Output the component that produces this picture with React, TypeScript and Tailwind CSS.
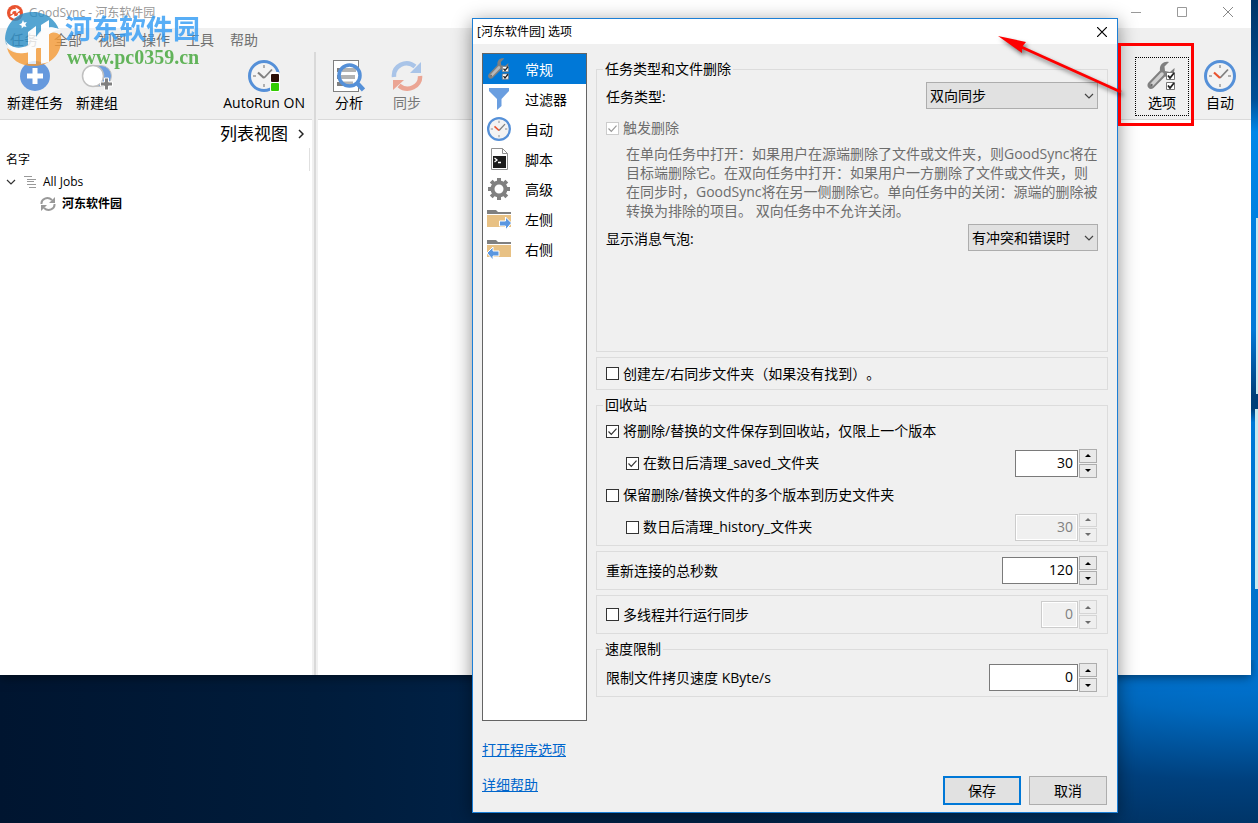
import React, { useState } from "react";

type IconProps = { className?: string };

/* ---------- Icons ---------- */

const AppLogo = () => (
  <svg width="16" height="16" viewBox="0 0 16 16" className="shrink-0">
    <circle cx="8" cy="8" r="8" fill="#e9532f" />
    <path d="M4.500 9C3.500 6 6 4.200 9 5.200" fill="none" stroke="#fff" strokeWidth="2" />
    <path d="M8.500 2.200l4.500 3-3.500 3.300z" fill="#fff" />
    <path d="M11.800 8c.8 2.800-1.600 4.600-4.600 3.800" fill="none" stroke="#fff" strokeWidth="2" />
    <path d="M7.800 14.200L3 11.500l4-2.800z" fill="#fff" />
  </svg>
);

const PlusCircle = () => (
  <svg width="32" height="32" viewBox="0 0 32 32">
    <circle cx="16" cy="16" r="15" fill="#6699dd" />
    <path d="M13.500 8h5v5.500H24v5h-5.500V24h-5v-5.500H8v-5h5.500z" fill="#fff" />
  </svg>
);

const GroupIcon = () => (
  <svg width="32" height="32" viewBox="0 0 32 32">
    <path d="M12 5.500h8a10.500 10.500 0 0 1 0 21h-8z" fill="#6f9fe0" stroke="#c4c4c4" strokeWidth="1" />
    <circle cx="12" cy="16" r="10.500" fill="#fff" stroke="#c0c0c0" strokeWidth="1.500" />
    <path d="M23.500 18h4v4h4v4h-4v4h-4v-4h-4v-4h4z" fill="#808080" stroke="#fff" strokeWidth="1" />
  </svg>
);

const Clock = ({ className, accent = "#e9532f" }: IconProps & { accent?: string }) => (
  <svg viewBox="0 0 32 32" className={className}>
    <circle cx="16" cy="16" r="14.500" fill="#f3f3f3" stroke="#5590d8" strokeWidth="3" />
    <path d="M16 5v3M16 24v3M5 16h3M24 16h3" stroke="#b0b0b0" strokeWidth="2" />
    <path d="M16 18l8-8.500" stroke="#808080" strokeWidth="1.800" />
    <path d="M10 12.500l6 5.500" stroke={accent} strokeWidth="2.200" />
  </svg>
);

const AutoRunIcon = () => (
  <div className="relative h-8 w-8">
    <Clock className="h-8 w-8" accent="#808080" />
    <svg width="10" height="20" viewBox="0 0 10 20" className="absolute bottom-0 right-0">
      <rect width="10" height="20" rx="2" fill="#fff" />
      <rect x="1" y="2" width="8" height="8" rx="1" fill="#2c1008" />
      <rect x="1" y="11" width="8" height="8" rx="1" fill="#3c0" />
    </svg>
  </div>
);

const AnalyzeIcon = () => (
  <svg width="32" height="32" viewBox="0 0 32 32">
    <rect x="0.500" y="0.500" width="25" height="31" fill="#fff" stroke="#808080" />
    <path d="M4 10h6M4 17h4M4 24h8" stroke="#808080" strokeWidth="4" />
    <circle cx="16.500" cy="15.500" r="10" fill="#fff" />
    <path d="M9 10h14M7 17h15M10 23.500h10" stroke="#b3b3b3" strokeWidth="4" />
    <circle cx="16.500" cy="15.500" r="10.500" fill="none" stroke="#5590d8" strokeWidth="3.500" />
    <path d="M23.500 22.500l7 7.500" stroke="#5590d8" strokeWidth="4.500" />
  </svg>
);

const SyncIcon = () => (
  <svg width="32" height="32" viewBox="0 0 32 32">
    <path d="M3 17C2 6 15-1 24 6.500" fill="none" stroke="#a9c4e8" strokeWidth="4.500" />
    <path d="M30 2v11H19z" fill="#a9c4e8" />
    <path d="M29 16c1 10-12 17-21 9.500" fill="none" stroke="#eba594" strokeWidth="4.500" />
    <path d="M2 30V20h11z" fill="#eba594" />
  </svg>
);

const WrenchIcon = ({ className, light }: IconProps & { light?: boolean }) => (
  <svg viewBox="0 0 32 32" className={className}>
    <path
      d="M23 2c-5-1.500-10 2.500-9 8.500L2.500 22.500C-.5 26 3.500 31 7.500 28L19 16.500c5 1 10-2.500 9.500-8.500l-4.500 4-5-1-.5-4.500z"
      fill="#808080"
    />
    <path d="M6 24.500L16 14" stroke={light ? "#b8b8b8" : "#d0d0d0"} strokeWidth="3.500" strokeLinecap="round" />
    <circle cx="5.500" cy="25" r="1.200" fill="#666" />
    <path d="M20.500 12.500h8v7h-8zM20.500 22.500h8v7h-8z" fill="#fff" stroke="#777" />
    <path d="M22 15.500l2 2.500 4-5M22 25.500l2 2.500 4-5" fill="none" stroke="#222" strokeWidth="1.800" />
  </svg>
);

const FilterIcon = () => (
  <svg width="24" height="24" viewBox="0 0 24 24">
    <path d="M2 1h20v3l-7.500 8v7L10 23V12L2 4z" fill="#6a9ee0" />
  </svg>
);

const ScriptIcon = () => (
  <svg width="24" height="24" viewBox="0 0 24 24">
    <path d="M4.500 1.500h11l5 5v16h-16z" fill="#fff" stroke="#909090" />
    <path d="M15.500 1.500v5h5" fill="none" stroke="#909090" />
    <rect x="6" y="9" width="13" height="12" fill="#1c1c1c" />
    <path d="M7.500 11l2.500 2-2.500 2M11 15.500h3" fill="none" stroke="#fff" strokeWidth="1.300" />
  </svg>
);

const GearIcon = () => (
  <svg width="24" height="24" viewBox="0 0 24 24">
    <g stroke="#808080" strokeWidth="4">
      <path d="M12 1v5M12 18v5M1 12h5M18 12h5M4.200 4.200l3.500 3.500M16.300 16.300l3.500 3.500M4.200 19.800l3.500-3.500M16.300 7.700l3.500-3.500" />
      <circle cx="12" cy="12" r="6.500" fill="#fff" />
    </g>
  </svg>
);

const FolderIcon = ({ left }: { left?: boolean }) => (
  <svg width="24" height="24" viewBox="0 0 24 24">
    <path d="M0 3h9l2 2h13v2H0z" fill="#808080" />
    <path d="M0 8h24v12H0z" fill="#e8c184" />
    {left ? (
      <path d="M0 16l6-6v4h6v5H6v4z" fill="#5b97e0" stroke="#fff" />
    ) : (
      <path d="M24.500 16l-6-6v4h-6v5h6v4z" fill="#5b97e0" stroke="#fff" />
    )}
  </svg>
);

const ChevronDown = ({ className }: IconProps) => (
  <svg width="10" height="6" viewBox="0 0 10 6" className={className}>
    <path d="M1 1l4 4 4-4" fill="none" stroke="currentColor" strokeWidth="1.200" />
  </svg>
);

/* ---------- Form parts ---------- */

const Check = ({
  label,
  checked,
  disabled,
}: {
  label: string;
  checked?: boolean;
  disabled?: boolean;
}) => (
  <label className={`relative flex items-center gap-1 ${disabled ? "text-[#6d6d6d]" : "text-black"}`}>
    <input
      type="checkbox"
      defaultChecked={checked}
      disabled={disabled}
      className="peer h-[13px] w-[13px] appearance-none border border-[#333] bg-white disabled:border-[#ccc]"
    />
    <svg
      viewBox="0 0 13 13"
      className="pointer-events-none invisible absolute left-0 h-[13px] w-[13px] peer-checked:visible peer-disabled:opacity-50"
    >
      <path d="M2.500 6.500l2.800 2.800 5.200-5.600" fill="none" stroke="#333" strokeWidth="1.200" />
    </svg>
    <span>{label}</span>
  </label>
);

const Dropdown = ({ id, value, className }: { id: string; value: string; className: string }) => (
  <div className={`relative text-black ${className}`}>
    <select
      id={id}
      defaultValue={value}
      className="h-[27px] w-full appearance-none border border-[#adadad] bg-[#e1e1e1] pl-[3px] leading-5"
    >
      <option>{value}</option>
    </select>
    <ChevronDown className="pointer-events-none absolute right-1 top-[11px] text-[#444]" />
  </div>
);

const Spinner = ({
  label,
  initial,
  disabled,
  className,
}: {
  label: string;
  initial: number;
  disabled?: boolean;
  className: string;
}) => {
  const [value, setValue] = useState(initial);
  const button =
    "flex h-[14px] w-[18px] items-center justify-center border border-[#adadad] bg-[#e9e9e9] text-black disabled:border-[#d5d5d5] disabled:bg-[#efefef] disabled:text-[#6d6d6d]";

  return (
    <div className="flex items-center gap-px">
      <input
        type="text"
        inputMode="numeric"
        aria-label={label}
        disabled={disabled}
        value={value}
        onChange={(e) => setValue(Number(e.target.value) || 0)}
        className={`h-[27px] border border-[#7a7a7a] bg-white pb-0.5 pr-1 text-right text-black disabled:border-[#ccc] disabled:bg-[#f0f0f0] disabled:text-[#808080] disabled:shadow-[inset_0_0_0_1px_#fff] ${className}`}
      />
      <div className="flex flex-col gap-px">
        <button type="button" aria-label="增加" disabled={disabled} onClick={() => setValue(value + 1)} className={button}>
          <svg width="6" height="3" viewBox="0 0 6 3">
            <path d="M0 3l3-3 3 3z" fill="currentColor" />
          </svg>
        </button>
        <button type="button" aria-label="减少" disabled={disabled} onClick={() => setValue(Math.max(0, value - 1))} className={button}>
          <svg width="6" height="3" viewBox="0 0 6 3">
            <path d="M0 0l3 3 3-3z" fill="currentColor" />
          </svg>
        </button>
      </div>
    </div>
  );
};

const Group = ({ title, children }: { title?: string; children: React.ReactNode }) => (
  <fieldset className="min-w-0 border border-[#dcdcdc] px-1.5">
    {title && <legend className="px-0.5 leading-5">{title}</legend>}
    <div className="pl-[3px] pr-1">{children}</div>
  </fieldset>
);

const ToolButton = ({
  label,
  icon,
  className = "",
}: {
  label: string;
  icon: React.ReactNode;
  className?: string;
}) => (
  <button type="button" className={`flex shrink-0 flex-col items-center gap-px whitespace-nowrap leading-5 ${className}`}>
    {icon}
    <span>{label}</span>
  </button>
);

/* ---------- Main window ---------- */

const menus = ["任务", "全部", "视图", "操作", "工具", "帮助"];

const MainWindow = () => (
  <div className="mr-[7px] flex flex-1 flex-col bg-white shadow-[0_2px_10px_rgba(0,0,0,0.5)]">
    {/* Title bar */}
    <div className="flex h-7 items-start justify-between text-[#999]">
      <div className="flex h-[26px] items-center gap-1.5 pl-[7px] text-xs">
        <AppLogo />
        <span>GoodSync - 河东软件园</span>
      </div>
      <div className="flex h-6 items-center">
        <button type="button" aria-label="最小化" className="flex w-[46px] justify-center">
          <svg width="10" height="10" viewBox="0 0 10 10"><path d="M0 5.500h10" stroke="#999" /></svg>
        </button>
        <button type="button" aria-label="最大化" className="flex w-[46px] justify-center">
          <svg width="10" height="10" viewBox="0 0 10 10"><path d="M.5.5h9v9h-9z" fill="none" stroke="#999" /></svg>
        </button>
        <button type="button" aria-label="关闭" className="flex w-[46px] justify-center">
          <svg width="10" height="10" viewBox="0 0 10 10"><path d="M0 0l10 10M10 0L0 10" stroke="#888" /></svg>
        </button>
      </div>
    </div>

    {/* Menu */}
    <nav className="flex h-6 items-center gap-4 bg-[#f0f0f0] pl-2.5 text-[#707070]">
      {menus.map((item) => (
        <button type="button" key={item}>{item}</button>
      ))}
    </nav>

    <div className="flex flex-1">
      {/* Jobs */}
      <div className="flex w-[312px] shrink-0 flex-col">
        <div className="flex h-[68px] items-start gap-[13px] border-b border-[#dadada] bg-[#f0f0f0] px-[7px] pt-2">
          <ToolButton label="新建任务" icon={<PlusCircle />} />
          <ToolButton label="新建组" icon={<GroupIcon />} />
          <ToolButton label="AutoRun ON" icon={<AutoRunIcon />} className="ml-auto" />
        </div>
        <button type="button" className="flex h-7 items-center justify-end gap-2.5 pr-2 text-[17px]">
          列表视图
          <svg width="6" height="10" viewBox="0 0 6 10">
            <path d="M1 1l4 4-4 4" fill="none" stroke="#222" strokeWidth="1.500" />
          </svg>
        </button>
        <div className="mr-0.5 flex h-[23px] items-center border-r border-[#e0e0e0] pl-1.5 text-xs">名字</div>
        <div className="flex h-[22px] items-center pl-1.5 text-xs">
          <ChevronDown className="text-[#333]" />
          <svg width="12" height="12" viewBox="0 0 12 12" className="ml-2 mr-[7px]">
            <path d="M0 .5h8M3 3.500h9M3 5.500h7M3 8.500h9M5 11.500h7" stroke="#999" />
          </svg>
          All Jobs
        </div>
        <div className="flex h-[22px] items-center gap-1.5 pl-10 text-xs font-bold">
          <svg width="16" height="16" viewBox="0 0 16 16">
            <path d="M1.500 8C1 3 7.500 0 12 4M14.500 8C15 13 8.500 16 4 12" fill="none" stroke="#999" strokeWidth="2" />
            <path d="M15 1v6H9zM1 15V9h6z" fill="#999" />
          </svg>
          河东软件园
        </div>
      </div>

      {/* Splitter */}
      <div className="w-1.5 shrink-0 border-x-2 border-[#f0f0f0] bg-[#d9d9d9]" />

      <div className="min-w-0 flex-1">
        <div className="flex h-[68px] items-start border-b border-[#dadada] bg-[#f0f0f0] px-[15px] pt-2">
          <ToolButton label="分析" icon={<AnalyzeIcon />} className="mr-[26px]" />
          <ToolButton label="同步" icon={<SyncIcon />} className="text-[#777]" />
          <ToolButton
            label="选项"
            icon={<WrenchIcon className="h-8 w-8" />}
            className="-mt-[3px] ml-auto mr-[15px] w-[54px] border border-dotted border-black py-0.5"
          />
          <ToolButton label="自动" icon={<Clock className="h-8 w-8" />} />
        </div>
      </div>
    </div>
  </div>
);

/* ---------- Options dialog ---------- */

const sections = [
  { name: "常规", icon: <WrenchIcon className="h-6 w-6" light /> },
  { name: "过滤器", icon: <FilterIcon /> },
  { name: "自动", icon: <Clock className="h-6 w-6" /> },
  { name: "脚本", icon: <ScriptIcon /> },
  { name: "高级", icon: <GearIcon /> },
  { name: "左侧", icon: <FolderIcon /> },
  { name: "右侧", icon: <FolderIcon left /> },
];

const OptionsDialog = () => {
  const [active, setActive] = useState("常规");

  return (
    <form
      className="absolute left-[472px] top-[18px] w-[646px] border border-[#1c7fd6] bg-[#f0f0f0] shadow-[0_4px_18px_rgba(0,0,0,0.45)]"
      onSubmit={(e) => e.preventDefault()}
    >
      <div className="flex h-[25px] items-center justify-between bg-white pl-1 pr-2.5 text-xs">
        <h1>[河东软件园] 选项</h1>
        <button type="button" aria-label="关闭">
          <svg width="10" height="10" viewBox="0 0 10 10">
            <path d="M0 0l10 10M10 0L0 10" stroke="#000" strokeWidth="1.200" />
          </svg>
        </button>
      </div>

      <div className="flex min-h-[668px] gap-[9px] px-[9px] pt-[9px]">
        <nav className="min-h-[668px] w-[105px] shrink-0 border border-[#646464] bg-white">
          {sections.map((item) => (
            <button
              type="button"
              key={item.name}
              onClick={() => setActive(item.name)}
              className={`flex h-[30px] w-full items-center gap-3.5 pl-1 ${
                active === item.name ? "bg-[#0078d7] text-white" : "text-black"
              }`}
            >
              {item.icon}
              <span className="pt-0.5">{item.name}</span>
            </button>
          ))}
        </nav>

        <div className="flex min-w-0 flex-1 flex-col gap-[5px] pt-1.5">
          <Group title="任务类型和文件删除">
            <div className="-mr-px flex items-center justify-between pt-[3px]">
              <label htmlFor="job-type" className="pt-0.5">任务类型:</label>
              <Dropdown id="job-type" value="双向同步" className="w-[172px]" />
            </div>
            <div className="pt-[9px]">
              <Check label="触发删除" checked disabled />
            </div>
            <p className="whitespace-nowrap pb-1 pl-5 pt-1.5 leading-[19px] text-[#6d6d6d]">
              在单向任务中打开：如果用户在源端删除了文件或文件夹，则GoodSync将在
              <br />
              目标端删除它。在双向任务中打开：如果用户一方删除了文件或文件夹，则
              <br />
              在同步时，GoodSync将在另一侧删除它。单向任务中的关闭：源端的删除被
              <br />
              转换为排除的项目。 双向任务中不允许关闭。
            </p>
            <div className="-mr-px flex items-center justify-between pb-[100px]">
              <label htmlFor="balloons" className="pt-0.5">显示消息气泡:</label>
              <Dropdown id="balloons" value="有冲突和错误时" className="w-[130px]" />
            </div>
          </Group>

          <Group>
            <div className="flex h-[31px] items-center">
              <Check label="创建左/右同步文件夹（如果没有找到）。" />
            </div>
          </Group>

          <Group title="回收站">
            <div className="flex h-8 items-center">
              <Check label="将删除/替换的文件保存到回收站，仅限上一个版本" checked />
            </div>
            <div className="flex h-8 items-center justify-between pl-5">
              <Check label="在数日后清理_saved_文件夹" checked />
              <Spinner label="在数日后清理_saved_文件夹" initial={30} className="w-[63px]" />
            </div>
            <div className="flex h-8 items-center">
              <Check label="保留删除/替换文件的多个版本到历史文件夹" />
            </div>
            <div className="mb-0.5 flex h-8 items-center justify-between pl-5">
              <Check label="数日后清理_history_文件夹" />
              <Spinner label="数日后清理_history_文件夹" initial={30} disabled className="w-[63px]" />
            </div>
          </Group>

          <Group>
            <div className="flex h-[37px] items-center justify-between">
              <span>重新连接的总秒数</span>
              <Spinner label="重新连接的总秒数" initial={120} className="w-[76px]" />
            </div>
          </Group>

          <Group>
            <div className="flex h-[37px] items-center justify-between">
              <Check label="多线程并行运行同步" />
              <Spinner label="多线程并行运行同步" initial={0} disabled className="w-[37px]" />
            </div>
          </Group>

          <Group title="速度限制">
            <div className="flex h-[37px] items-center justify-between">
              <span>限制文件拷贝速度 KByte/s</span>
              <Spinner label="限制文件拷贝速度" initial={0} className="w-[89px]" />
            </div>
          </Group>
        </div>
      </div>

      {/* Footer */}
      <div className="flex justify-between px-[9px] pb-[7px]">
        <div className="flex flex-col items-start gap-[15px] pb-2.5 pt-[19px] text-[#0066cc] underline">
          <a href="#program-options">打开程序选项</a>
          <a href="#help">详细帮助</a>
        </div>
        <div className="flex items-end gap-2 pr-px">
          <button type="submit" className="h-[29px] w-[78px] border-2 border-[#0078d7] bg-[#e1e1e1]">保存</button>
          <button type="button" className="h-[29px] w-[78px] border border-[#adadad] bg-[#e1e1e1]">取消</button>
        </div>
      </div>
    </form>
  );
};

/* ---------- Overlays ---------- */

const Watermark = () => (
  <div className="pointer-events-none absolute left-1 top-2.5 flex opacity-80">
    <svg width="58" height="57" viewBox="0 0 58 57">
      <path d="M1 29C2 12 14 2 29 2c13 0 23 8 26 18-8-6-18-2-23 7C26 38 12 43 2 34z" fill="#2b8fc8" />
      <path d="M3 38c10 9 24 6 32-5 7-10 15-14 22-7 2 16-9 30-28 30C16 56 6 49 3 38z" fill="#f59a35" />
      <path d="M1 29c3 9 17 12 26 4 9-8 13-21 30-13-9-1-15 7-20 14-8 11-31 15-36-5z" fill="#fff" />
      <path d="M24 22l8-6v38h-8zM37 15l8-5v42l-8 2V38h-5v-6h5z" fill="#fff" />
      <path d="M19 10l1 2.500 2.800-.5-1.500 2.500 1.200 2.500-2.800-.5-2 2v-2.800L15 14.500l2.700-1.200z" fill="#fff" />
    </svg>
    <div className="flex flex-col pl-[3px] font-bold">
      <span className="pt-[3px] text-[27px] leading-[31px] text-[#2f9bf5]">河东软件园</span>
      <span className="pl-0.5 font-['Liberation_Serif',serif] text-[20px] leading-[26px] text-[#3fa535]">www.pc0359.cn</span>
    </div>
  </div>
);

const Callout = () => (
  <>
    <div className="pointer-events-none absolute left-[1118px] top-[43px] h-[83px] w-[76px] border-[3px] border-[#fe0000]" />
    <svg
      width="140"
      height="80"
      viewBox="0 0 140 80"
      className="pointer-events-none absolute left-[990px] top-[27px] drop-shadow-[2px_3px_2px_rgba(0,0,0,0.5)]"
    >
      <path d="M29 19l102 46" stroke="#fe0000" strokeWidth="3" />
      <path d="M8 9l28 6-4 5v6z" fill="#fe0000" />
    </svg>
  </>
);

const App = () => (
  <div className="relative flex min-h-screen flex-col overflow-hidden bg-[radial-gradient(ellipse_760px_240px_at_100%_78%,#007fe6_0%,#0068bd_30%,#00407d_58%,transparent_100%),linear-gradient(to_right,#001530,#001c3b_25%,#002247_40%,#00264c)] pb-[148px] font-['Open_Sans','Noto_Sans_CJK_SC',sans-serif] text-sm leading-5 text-black [text-spacing-trim:space-all]">
    {/* Light from the wallpaper at the right edge */}
    <div className="absolute right-0 top-0 h-[660px] w-[7px] bg-[linear-gradient(to_bottom,#003468,#004f96_15%,#0087e8_20%,#0078d7_50%,#003d78_60%,#003d78_62%,#0078d7_64%,#006fc8)]" />
    <div className="absolute right-0 top-[218px] h-44 w-0.5 bg-[#c5e8ef]" />
    <div className="absolute right-0 top-[409px] h-[180px] w-[3px] bg-[#c5e8ef]" />
    <MainWindow />
    <OptionsDialog />
    <Watermark />
    <Callout />
  </div>
);

export default App;
